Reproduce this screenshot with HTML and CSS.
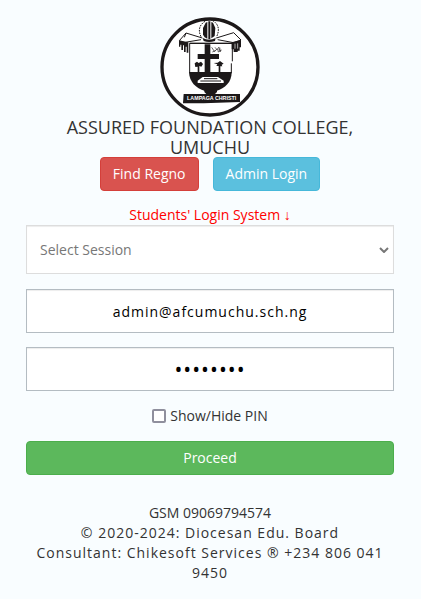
FILE: index.html
```html
<!DOCTYPE html>
<html lang="en">

<head>
    <meta charset="UTF-8">
    <meta name="viewport" content="width=device-width, initial-scale=1.0">
    <title>Assured Foundation College, Umuchu</title>
    <link rel="stylesheet" href="styles.css">
</head>

<body>
    <div class="login-container">
        <!-- School crest -->
        <svg class="logo" viewBox="15 21 300 300" role="img" aria-label="School crest">
            <circle cx="165" cy="171" r="144" fill="#fff" stroke="#1c1819" stroke-width="10" />

            <!-- Mitre -->
            <path d="M138 80 C128 60 134 44 150 34 L162 26 L176 34 C192 44 194 62 184 82" fill="none" stroke="#1c1819" stroke-width="3" stroke-dasharray="5 3" />
            <path d="M144 74 L144 54 L152 38 L157 36 V86 L149 82 Z M160 34 H166 V88 H160 Z M169 36 L174 38 L181 54 L179 78 L169 85 Z" fill="#1c1819" />
            <path d="M143 84 Q162 94 182 84 L180 93 Q162 99 146 93 Z" fill="#1c1819" />

            <!-- Ribbon -->
            <path d="M142 84 L93 69 L73 92 L90 97 L138 89 M184 84 L236 68 L258 90 L236 98 L188 89 M93 69 L88 82" fill="none" stroke="#1c1819" stroke-width="3" />
            <path d="M72 92 L100 97 V128 H95 V110 H92 V126 H87 V106 H84 V120 H79 V104 H76 V110 H72 Z" fill="#1c1819" />
            <path d="M230 97 L258 90 V112 H254 V122 H248 V126 H236 V118 H230 Z" fill="#1c1819" />
            <path d="M240 101 V116 M248 100 V116" stroke="#fff" stroke-width="2" />

            <!-- Shield -->
            <path d="M104 100 H232 V154 M229 160 V190 M104 100 V190" fill="none" stroke="#1c1819" stroke-width="3" />
            <path d="M104 100 H232" stroke="#1c1819" stroke-width="4" />
            <path d="M102 186 H230 C230 218 210 234 184 243 H150 C122 234 103 216 102 186 Z" fill="#1c1819" />
            <path d="M149 103 H166 V132 H192 V147 H166 V188 H149 V147 H128 V132 H149 Z" fill="#1c1819" />

            <!-- Bird -->
            <path d="M170 112 L178 124 L188 116 L190 126 L200 120 M180 112 L187 120 M190 111 L196 125 L194 112 M172 126 L182 122" fill="none" stroke="#1c1819" stroke-width="2" />

            <!-- Trees -->
            <path d="M119 160 L126 155 L131 159 L138 155 L144 162 L139 170 L133 168 V188 H128 V170 L121 171 Z" fill="#1c1819" />
            <path d="M176 159 L188 158 L195 153 L206 161 L200 164 L202 169 H196 V188 H191 V168 H184 L187 163 Z" fill="#1c1819" />

            <!-- Open book -->
            <path d="M143 201 H189 L206 212 V219 H128 V212 Z" fill="#fff" />
            <path d="M147 206 H187 M136 213 H198" stroke="#1c1819" stroke-width="3" />

            <!-- Motto -->
            <path d="M148 238 H186 V246 L180 252 H154 L148 246 Z" fill="#1c1819" />
            <path d="M86 252 H255 V276 L146 280 H84 Z" fill="#1c1819" />
            <text class="motto" x="170" y="270" text-anchor="middle">LAMPAGA CHRISTI</text>
        </svg>

        <h1 class="school-name">ASSURED FOUNDATION COLLEGE, UMUCHU</h1>

        <div class="top-buttons">
            <button type="button" class="btn btn-danger">Find Regno</button>
            <button type="button" class="btn btn-info">Admin Login</button>
        </div>

        <form class="login-form">
            <p class="form-title">Students' Login System ↓</p>

            <div class="select-box">
                <select class="field session" aria-label="Session">
                    <option>Select Session</option>
                </select>
                <svg class="arrow" viewBox="0 0 10 6" aria-hidden="true">
                    <path d="M1 1 L5 5 L9 1" fill="none" stroke="#777" stroke-width="2" />
                </svg>
            </div>

            <input type="text" class="field" aria-label="Registration number" value="admin@afcumuchu.sch.ng">
            <input type="password" class="field" id="pin" aria-label="PIN" value="12345678">

            <label class="show-pin">
                <input type="checkbox" id="show-pin">
                Show/Hide PIN
            </label>

            <button type="submit" class="btn btn-success">Proceed</button>
        </form>

        <div class="footer">
            <p>GSM 09069794574</p>
            <p class="credits">© 2020-2024: Diocesan Edu. Board<br>Consultant: Chikesoft Services ® +234 806 041 9450</p>
        </div>
    </div>

    <script>
        // Show or hide the PIN
        document.getElementById('show-pin').addEventListener('change', function () {
            document.getElementById('pin').type = this.checked ? 'text' : 'password';
        });
    </script>
</body>

</html>
```
FILE: styles.css
```css
* {
    box-sizing: border-box;
}

body {
    font-family: "Open Sans", "Noto Sans", sans-serif;
    font-size: 14px;
    line-height: 20px;
    color: #333;
    margin: 0;
    background-color: #f9fdff;
}

p {
    margin: 0;
}

.login-container {
    max-width: 600px;
    margin: 0 auto;
    padding: 17px 27px 16px 26px;
    text-align: center;
}

.logo {
    display: block;
    width: 100px;
    height: 100px;
    margin: 0 auto;
}

.motto {
    font-family: "Liberation Sans", Arial, sans-serif;
    font-size: 16px;
    font-weight: bold;
    fill: #fff;
}

.school-name {
    margin: 0;
    font-size: 18px;
    font-weight: 400;
    line-height: 20px;
}

.top-buttons {
    display: flex;
    justify-content: center;
    gap: 14px;
    margin-bottom: 14px;
}

.btn {
    height: 34px;
    padding: 0 12px;
    border: 1px solid transparent;
    border-radius: 4px;
    font-family: inherit;
    font-size: 14px;
    line-height: 20px;
    color: #fff;
    cursor: pointer;
}

.btn-danger {
    background-color: #d9534f;
    border-color: #d43f3a;
}

.btn-info {
    background-color: #5bc0de;
    border-color: #46b8da;
}

.btn-success {
    width: 100%;
    background-color: #5cb85c;
    border-color: #4cae4c;
}

.form-title {
    color: #f00;
}

.field {
    display: block;
    width: 100%;
    height: 44px;
    margin-bottom: 14px;
    padding: 0 13px;
    border: 1px solid #b4bcc2;
    border-radius: 0;
    background-color: #fff;
    box-shadow: inset 0 1px 1px rgba(0, 0, 0, 0.075);
    font-family: inherit;
    font-size: 14px;
    letter-spacing: 1px;
    text-align: center;
    color: #000;
}

/* Bigger dots while the PIN is hidden */
.field[type="password"] {
    font-size: 21px;
}

.select-box {
    position: relative;
    margin-bottom: 15px;
}

.session {
    height: 49px;
    margin-bottom: 0;
    border-color: #ddd;
    letter-spacing: normal;
    text-align: left;
    color: #777;
    appearance: none;
}

/* Arrow drawn over the select */
.arrow {
    position: absolute;
    top: 22px;
    right: 5px;
    width: 10px;
    height: 6px;
    pointer-events: none;
}

.show-pin {
    display: flex;
    justify-content: center;
    align-items: center;
    gap: 4px;
    margin: 15px 0;
}

.show-pin input {
    appearance: none;
    width: 14px;
    height: 14px;
    margin: 0;
    border: 2px solid #8f8f9d;
    border-radius: 2px;
    background-color: #fff;
}

.show-pin input:checked {
    background-color: #5bc0de;
}

.footer {
    margin-top: 28px;
}

.credits {
    letter-spacing: 1px;
}
```
